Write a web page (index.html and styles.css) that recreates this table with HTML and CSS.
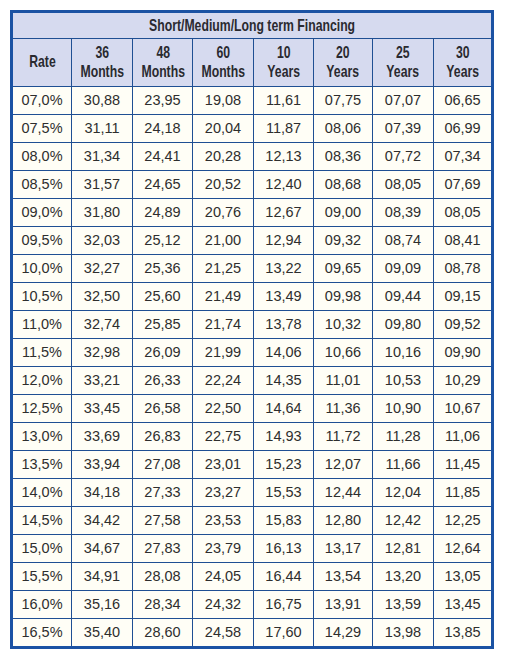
FILE: index.html
```html
<!DOCTYPE html>
<html>
<head>
<meta charset="utf-8">
<link rel="stylesheet" href="styles.css">
</head>
<body>
<table class="rates">
  <colgroup>
    <col class="c1"><col class="c2"><col class="c3"><col class="c4"><col class="c5"><col class="c6"><col class="c7"><col class="c8">
  </colgroup>
  <thead>
    <tr class="h1"><th colspan="8"><span class="nar">Short/Medium/Long term Financing</span></th></tr>
    <tr class="h2">
      <th><span class="nar">Rate</span></th>
      <th><span class="nar">36<br>Months</span></th>
      <th><span class="nar">48<br>Months</span></th>
      <th><span class="nar">60<br>Months</span></th>
      <th><span class="nar">10<br>Years</span></th>
      <th><span class="nar">20<br>Years</span></th>
      <th><span class="nar">25<br>Years</span></th>
      <th><span class="nar">30<br>Years</span></th>
    </tr>
  </thead>
  <tbody>
    <tr><td>07,0%</td><td>30,88</td><td>23,95</td><td>19,08</td><td>11,61</td><td>07,75</td><td>07,07</td><td>06,65</td></tr>
    <tr><td>07,5%</td><td>31,11</td><td>24,18</td><td>20,04</td><td>11,87</td><td>08,06</td><td>07,39</td><td>06,99</td></tr>
    <tr><td>08,0%</td><td>31,34</td><td>24,41</td><td>20,28</td><td>12,13</td><td>08,36</td><td>07,72</td><td>07,34</td></tr>
    <tr><td>08,5%</td><td>31,57</td><td>24,65</td><td>20,52</td><td>12,40</td><td>08,68</td><td>08,05</td><td>07,69</td></tr>
    <tr><td>09,0%</td><td>31,80</td><td>24,89</td><td>20,76</td><td>12,67</td><td>09,00</td><td>08,39</td><td>08,05</td></tr>
    <tr><td>09,5%</td><td>32,03</td><td>25,12</td><td>21,00</td><td>12,94</td><td>09,32</td><td>08,74</td><td>08,41</td></tr>
    <tr><td>10,0%</td><td>32,27</td><td>25,36</td><td>21,25</td><td>13,22</td><td>09,65</td><td>09,09</td><td>08,78</td></tr>
    <tr><td>10,5%</td><td>32,50</td><td>25,60</td><td>21,49</td><td>13,49</td><td>09,98</td><td>09,44</td><td>09,15</td></tr>
    <tr><td>11,0%</td><td>32,74</td><td>25,85</td><td>21,74</td><td>13,78</td><td>10,32</td><td>09,80</td><td>09,52</td></tr>
    <tr><td>11,5%</td><td>32,98</td><td>26,09</td><td>21,99</td><td>14,06</td><td>10,66</td><td>10,16</td><td>09,90</td></tr>
    <tr><td>12,0%</td><td>33,21</td><td>26,33</td><td>22,24</td><td>14,35</td><td>11,01</td><td>10,53</td><td>10,29</td></tr>
    <tr><td>12,5%</td><td>33,45</td><td>26,58</td><td>22,50</td><td>14,64</td><td>11,36</td><td>10,90</td><td>10,67</td></tr>
    <tr><td>13,0%</td><td>33,69</td><td>26,83</td><td>22,75</td><td>14,93</td><td>11,72</td><td>11,28</td><td>11,06</td></tr>
    <tr><td>13,5%</td><td>33,94</td><td>27,08</td><td>23,01</td><td>15,23</td><td>12,07</td><td>11,66</td><td>11,45</td></tr>
    <tr><td>14,0%</td><td>34,18</td><td>27,33</td><td>23,27</td><td>15,53</td><td>12,44</td><td>12,04</td><td>11,85</td></tr>
    <tr><td>14,5%</td><td>34,42</td><td>27,58</td><td>23,53</td><td>15,83</td><td>12,80</td><td>12,42</td><td>12,25</td></tr>
    <tr><td>15,0%</td><td>34,67</td><td>27,83</td><td>23,79</td><td>16,13</td><td>13,17</td><td>12,81</td><td>12,64</td></tr>
    <tr><td>15,5%</td><td>34,91</td><td>28,08</td><td>24,05</td><td>16,44</td><td>13,54</td><td>13,20</td><td>13,05</td></tr>
    <tr><td>16,0%</td><td>35,16</td><td>28,34</td><td>24,32</td><td>16,75</td><td>13,91</td><td>13,59</td><td>13,45</td></tr>
    <tr><td>16,5%</td><td>35,40</td><td>28,60</td><td>24,58</td><td>17,60</td><td>14,29</td><td>13,98</td><td>13,85</td></tr>
  </tbody>
</table>
</body>
</html>
```

FILE: styles.css
```css
html, body {
  margin: 0;
  padding: 0;
  background: #ffffff;
}

body {
  padding: 10px 0 0 10px;
}

.rates {
  table-layout: fixed;
  width: 484px;
  border-collapse: separate;
  border-spacing: 0;
  border: 3px solid #1b52a3;
  font-family: "Liberation Sans", Arial, sans-serif;
  color: #2e2e2e;
}

.c1 { width: 59px; }
.c2 { width: 61px; }
.c3 { width: 60px; }
.c4 { width: 61px; }
.c5 { width: 60px; }
.c6 { width: 59px; }
.c7 { width: 61px; }
.c8 { width: 57px; }

.rates th,
.rates td {
  padding: 0;
  text-align: center;
  border-right: 1px solid #1f4f93;
  border-bottom: 1px solid #1f4f93;
}

.rates th:last-child,
.rates td:last-child {
  border-right: none;
}

.rates th {
  background: #d6daef;
  font-family: "Liberation Sans", Arial, sans-serif;
  font-weight: bold;
  font-size: 17px;
  color: #2a2a30;
  white-space: nowrap;
}

.nar {
  display: inline-block;
  transform: scaleX(0.72);
  transform-origin: center;
}

.h1 th {
  height: 25px;
  line-height: 25px;
}

.h2 th {
  height: 47px;
  line-height: 18.5px;
}

.rates td {
  background: #fffef6;
  height: 27px;
  font-size: 14.5px;
  line-height: 27px;
}

.rates tbody tr:last-child td {
  border-bottom: none;
}
```
